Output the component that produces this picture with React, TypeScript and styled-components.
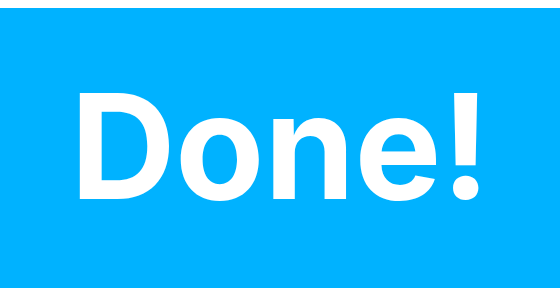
import React from "react";
import styled, { createGlobalStyle } from "styled-components";

const Global = createGlobalStyle`
  html, body { margin: 0; padding: 0; background: #ffffff; }
  body { padding: 8px 0; font-family: Inter, "Noto Sans", sans-serif; }
`;

const Banner = styled.div`
  height: 280px;
  background: #00b2ff;
  display: flex;
  align-items: center;
  justify-content: center;
`;

const Label = styled.span`
  color: #ffffff;
  font-family: Inter, "Noto Sans", sans-serif;
  font-weight: 700;
  font-size: 146px;
  line-height: 1;
  letter-spacing: -0.5px;
  margin-bottom: 4px;
`;

export default function App() {
  return (
    <>
      <Global />
      <Banner>
        <Label>Done!</Label>
      </Banner>
    </>
  );
}
